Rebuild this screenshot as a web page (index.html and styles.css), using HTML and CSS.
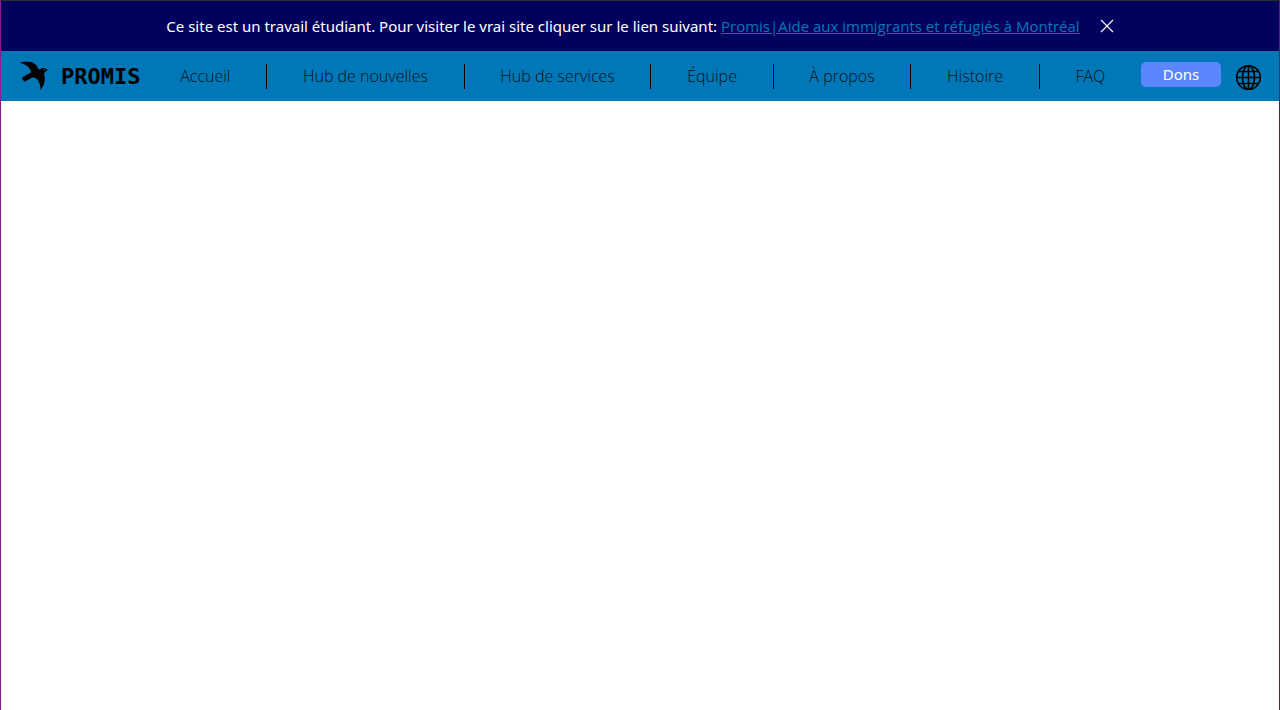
FILE: index.html
```html
<!DOCTYPE html>
<html lang="fr">
<head>
<meta charset="utf-8">
<meta name="viewport" content="width=device-width, initial-scale=1">
<title>Promis</title>
<link rel="stylesheet" href="styles.css">
</head>
<body>
<header>
  <div class="notice">
    <p class="notice-text">Ce site est un travail étudiant. Pour visiter le vrai site cliquer sur le lien suivant: <a class="notice-link" href="#">Promis|Aide aux immigrants et réfugiés à Montréal</a></p>
    <button class="notice-close" type="button" aria-label="Fermer">
      <svg width="14" height="14" viewBox="0 0 14 14" fill="none" stroke="currentColor" stroke-width="1.1"><path d="M1 1l12 12M13 1L1 13"/></svg>
    </button>
  </div>
  <div class="bar">
    <a class="logo" href="#">
      <svg class="bird" width="30" height="30" viewBox="0 0 30 30" aria-hidden="true"><path d="M.5 1.800C4 .6 9 .6 13 1.300C16.500 2.500 18 5 19.500 8.300C21 8.800 21.500 7.500 23 7.200C25 6.700 26.300 7 27 8L29.500 9L26.800 9.800C26 11.500 25 12.300 25 13.500C27 18 25.500 24 21.500 29C21.500 24 20.500 20.500 17 17.200C15.500 16.300 14 16.500 13 16.800L5.300 20.800L2.700 16.700L12.300 11.300C11 6.500 7 3.200 .5 1.800Z"/><path d="M24.300 8.200h1.700v1h-1.700z" fill="#0078b8"/></svg>
      <span class="wordmark">PROMIS</span>
    </a>
    <nav class="nav">
      <a class="nav-link" href="#">Accueil</a>
      <a class="nav-link" href="#">Hub de nouvelles</a>
      <a class="nav-link" href="#">Hub de services</a>
      <a class="nav-link" href="#">Équipe</a>
      <a class="nav-link" href="#">À propos</a>
      <a class="nav-link" href="#">Histoire</a>
      <a class="nav-link" href="#">FAQ</a>
    </nav>
    <button class="donate" type="button">Dons</button>
    <button class="language" type="button" aria-label="Langue">
      <svg width="27" height="27" viewBox="0 0 27 27" fill="none" stroke="#000" stroke-width="1.600"><circle cx="13.500" cy="13.500" r="11.800"/><ellipse cx="13.500" cy="13.500" rx="6" ry="11.800"/><path d="M13.500 1.700v23.600M1.700 13.500h23.600M3.500 7.500h20M3.500 19.500h20"/></svg>
    </button>
  </div>
</header>
</body>
</html>
```

FILE: styles.css
```css
* {
  box-sizing: border-box;
}

body {
  margin: 0;
  min-height: 100vh;
  border-top: 1px solid #2d2d30;
  border-left: 1px solid #8b1a8f;
  border-right: 1px solid #5c1a70;
  background: #fff;
  font-family: "Noto Sans", sans-serif;
  font-size: 15px;
  line-height: 25px;
}

button {
  padding: 0;
  border: 0;
  background: none;
  font: inherit;
  cursor: pointer;
}

svg {
  display: block;
}

.notice {
  display: flex;
  align-items: center;
  justify-content: center;
  gap: 20px;
  min-height: 50px;
  background: #02025e;
  color: #fff;
}

.notice-text {
  margin: 0;
}

.notice-link {
  color: #0078b8;
  font-family: "Open Sans", sans-serif;
}

.notice-close {
  color: #fff;
}

.bar {
  display: flex;
  align-items: center;
  min-height: 50px;
  padding: 0 17px 0 18px;
  background: #0078b8;
}

.logo {
  display: flex;
  align-items: center;
  gap: 12px;
  padding-right: 4px;
  color: #000;
  text-decoration: none;
}

.wordmark {
  font-family: "DejaVu Sans Mono", monospace;
  font-size: 22px;
  font-weight: 700;
}

.nav {
  display: flex;
  flex: 1;
}

.nav-link {
  flex: 1 1 auto;
  border-right: 1px solid #000;
  color: #0a0e12;
  font-family: "Open Sans", sans-serif;
  font-size: 16px;
  font-weight: 300;
  text-align: center;
  text-decoration: none;
}

.nav-link:last-child {
  border-right: 0;
}

.donate {
  width: 80px;
  margin-right: 14px;
  margin-bottom: 4px;
  border-radius: 5px;
  background: #5a87ff;
  color: #fff;
}

.language {
  margin-top: 2px;
}
```
